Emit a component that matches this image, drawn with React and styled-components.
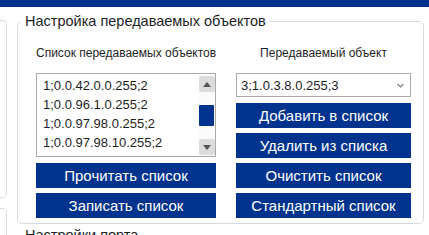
import styled, { createGlobalStyle } from "styled-components";

const GlobalStyle = createGlobalStyle`
  html, body {
    margin: 0;
    padding: 0;
    background: #fff;
    font-family: "Liberation Sans", Arial, sans-serif;
    color: #1e1e1e;
  }
`;

const BLUE = "#00338d";

const Page = styled.div`
  display: flex;
  flex-direction: column;
  width: 429px;
  height: 235px;
  overflow: hidden;
`;

const TopBar = styled.div`
  height: 7px;
  background: ${BLUE};
  flex-shrink: 0;
`;

const Body = styled.div`
  display: flex;
  gap: 10px;
  padding-top: 6px;
`;

const Side = styled.div`
  display: flex;
  flex-direction: column;
  gap: 10px;
  width: 7px;
  flex-shrink: 0;
  padding-top: 7px;
`;

const SideCard = styled.div`
  height: ${(p) => p.$h}px;
  border: 1px solid #d5dae0;
  border-left: none;
  border-radius: 0 5px 5px 0;
`;

const Main = styled.div`
  flex: 1;
  display: flex;
  flex-direction: column;
  gap: 3px;
  padding-right: 5px;
`;

const Fieldset = styled.fieldset`
  margin: 0;
  padding: 0;
  border: 1px solid #d5dae0;
  border-radius: 5px;
  min-width: 0;
`;

const Legend = styled.legend`
  margin-left: 3px;
  padding: 0 4px;
  font-size: 14.5px;
  line-height: 16px;
  color: #1e1e1e;
`;

const Columns = styled.div`
  display: grid;
  grid-template-columns: 180px 175px;
  column-gap: 20px;
  padding: 17px 11px 5px 18px;
`;

const Column = styled.div`
  display: flex;
  flex-direction: column;
  gap: 5px;
`;

const Label = styled.div`
  font-size: 12px;
  line-height: 15px;
  text-align: center;
  margin-bottom: 7px;
  white-space: nowrap;
`;

const ListBox = styled.div`
  display: flex;
  height: 82px;
  border: 1px solid #a9a9a9;
  margin-bottom: 1px;
  background: #fff;
`;

const Items = styled.div`
  flex: 1;
  overflow: hidden;
  padding: 2px 0 0 6px;
`;

const Item = styled.div`
  font-size: 13px;
  line-height: 19px;
  height: 19px;
  white-space: nowrap;
`;

const ScrollBar = styled.div`
  width: 16px;
  display: flex;
  flex-direction: column;
  padding: 2px 0 1px;
  background: #fafafa;
`;

const ArrowButton = styled.div`
  height: 16px;
  background: #dcdcdc;
  border-radius: 2px;
  display: flex;
  align-items: center;
  justify-content: center;
`;

const Track = styled.div`
  flex: 1;
  display: flex;
  flex-direction: column;
`;

const Thumb = styled.div`
  width: 15px;
  height: 21px;
  background: ${BLUE};
  border-radius: 1px;
`;

const SelectBox = styled.div`
  display: flex;
  align-items: center;
  justify-content: space-between;
  height: 22px;
  border: 1px solid #a9a9a9;
  padding: 0 6px 0 4px;
  font-size: 13px;
  margin-bottom: 1px;
  background: #fff;
`;

const Button = styled.button`
  height: 25px;
  border: none;
  border-radius: 0;
  background: ${BLUE};
  color: #fff;
  font-family: "Liberation Sans", Arial, sans-serif;
  font-size: 15px;
  padding: 0;
  cursor: pointer;
`;

const Triangle = ({ up }) => (
  <svg width="8" height="5" viewBox="0 0 8 5">
    <path d={up ? "M0 5 L4 0 L8 5 Z" : "M0 0 L4 5 L8 0 Z"} fill="#555" />
  </svg>
);

const Chevron = () => (
  <svg width="7" height="5" viewBox="0 0 7 5">
    <path d="M0.5 0.8 L3.5 3.8 L6.5 0.8" fill="none" stroke="#777" strokeWidth="1.2" />
  </svg>
);

const items = [
  "1;0.0.42.0.0.255;2",
  "1;0.0.96.1.0.255;2",
  "1;0.0.97.98.0.255;2",
  "1;0.0.97.98.10.255;2",
  "1;0.0.96.3.10.255;2",
];

export default function App() {
  const thumbOffset = 13;
  return (
    <>
      <GlobalStyle />
      <Page>
        <TopBar />
        <Body>
          <Side>
            <SideCard $h={176} />
            <SideCard $h={60} />
          </Side>
          <Main>
            <Fieldset>
              <Legend>Настройка передаваемых объектов</Legend>
              <Columns>
                <Column>
                  <Label>Список передаваемых объектов</Label>
                  <ListBox>
                    <Items>
                      {items.map((it) => (
                        <Item key={it}>{it}</Item>
                      ))}
                    </Items>
                    <ScrollBar>
                      <ArrowButton>
                        <Triangle up />
                      </ArrowButton>
                      <Track>
                        <Thumb style={{ marginTop: thumbOffset }} />
                      </Track>
                      <ArrowButton>
                        <Triangle />
                      </ArrowButton>
                    </ScrollBar>
                  </ListBox>
                  <Button>Прочитать список</Button>
                  <Button>Записать список</Button>
                </Column>
                <Column>
                  <Label>Передаваемый объект</Label>
                  <SelectBox>
                    <span>3;1.0.3.8.0.255;3</span>
                    <Chevron />
                  </SelectBox>
                  <Button>Добавить в список</Button>
                  <Button>Удалить из списка</Button>
                  <Button>Очистить список</Button>
                  <Button>Стандартный список</Button>
                </Column>
              </Columns>
            </Fieldset>
            <Fieldset>
              <Legend>Настройки порта</Legend>
              <div style={{ height: 40 }} />
            </Fieldset>
          </Main>
        </Body>
      </Page>
    </>
  );
}
